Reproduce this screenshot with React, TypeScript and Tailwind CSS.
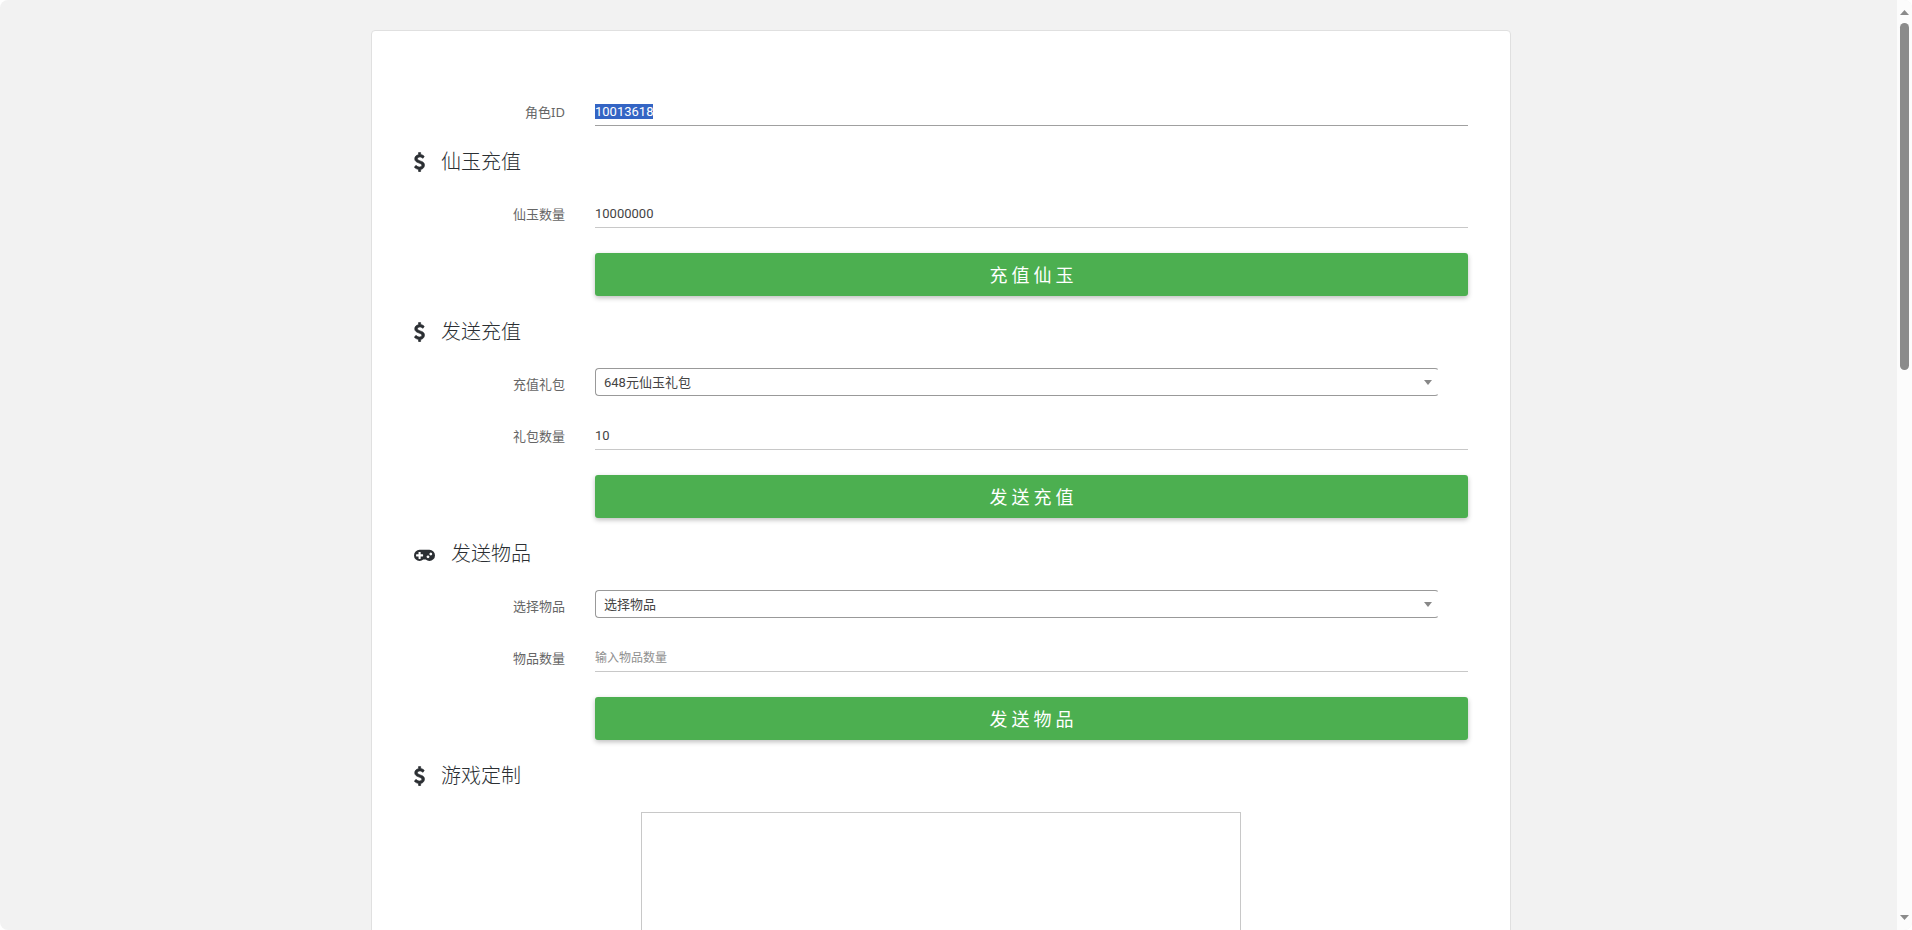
import { useEffect, useRef, type ReactNode } from "react";

function DollarIcon() {
  return (
    <svg
      viewBox="384 0 1024 1792"
      className="h-5 w-[11px] shrink-0 fill-current stroke-current"
      strokeWidth="60"
      aria-hidden="true"
    >
      <path d="M1362 1185q0 153-99.5 263.5t-258.5 136.5v175q0 14-9 23t-23 9h-135q-13 0-22.5-9.5t-9.5-22.5v-175q-66-9-127.5-31t-101.5-44.5-74-48-46.5-37.5-17.5-18q-17-21-2-41l103-135q7-10 23-12 15-2 24 9l2 2q113 99 243 125 37 8 74 8 81 0 142.5-43t61.5-122q0-28-15-53t-33.5-42-58.5-37.5-66-32-80-32.5q-39-16-61.5-25t-61.5-26.5-62.5-31-56.5-35.5-53.5-42.5-43.5-49-35.5-58-21-66.5-8.5-78q0-138 98-242t255-134v-180q0-13 9.5-22.5t22.5-9.5h135q14 0 23 9t9 23v176q57 6 110.5 23t87 33.5 63.5 37.5 39 29 15 14q17 18 5 38l-81 146q-8 15-23 16-14 3-27-7-3-3-14.5-12t-39-26.5-58.5-32-74.5-26-85.5-11.5q-95 0-155 43t-60 111q0 26 8.5 48t29.5 41.5 39.5 33 56 31 60.5 27 70 27.5q53 20 81 31.5t76 35 75.5 42.5 62 50 53 63.5 31.5 76.5 13 94z" />
    </svg>
  );
}

function GamepadIcon() {
  return (
    <svg viewBox="0 0 1920 1792" className="h-5 w-[21px] shrink-0 fill-current" aria-hidden="true">
      <path d="M832 1088v-128q0-14-9-23t-23-9h-192v-192q0-14-9-23t-23-9h-128q-14 0-23 9t-9 23v192h-192q-14 0-23 9t-9 23v128q0 14 9 23t23 9h192v192q0 14 9 23t23 9h128q14 0 23-9t9-23v-192h192q14 0 23-9t9-23zm576 64q0-53-37.5-90.5t-90.5-37.5-90.5 37.5-37.5 90.5 37.5 90.5 90.5 37.5 90.5-37.5 37.5-90.5zm256-256q0-53-37.5-90.5t-90.5-37.5-90.5 37.5-37.5 90.5 37.5 90.5 90.5 37.5 90.5-37.5 37.5-90.5zm256 128q0 212-150 362t-362 150q-192 0-338-128h-220q-146 128-338 128-212 0-362-150t-150-362 150-362 362-150h896q212 0 362 150t150 362z" />
    </svg>
  );
}

function Heading({ icon, children }: { icon: ReactNode; children: ReactNode }) {
  return (
    <h2 className="mt-[22px] mb-4 flex h-7 items-center gap-4 text-xl leading-7 font-light text-[#2b2f33]">
      {icon}
      <span>{children}</span>
    </h2>
  );
}

function Row({ id, label, children }: { id: string; label: string; children: ReactNode }) {
  return (
    <div className="grid grid-cols-[151px_1fr] gap-x-[30px]">
      <label
        htmlFor={id}
        className="pt-3 text-right font-['Noto_Sans','Noto_Sans_CJK_SC',sans-serif] text-[13px] leading-5 text-[#666]"
      >
        {label}
      </label>
      {children}
    </div>
  );
}

const inputClass =
  "h-9 w-full min-w-0 border-b border-[#c8c8c8] bg-transparent pt-2 pb-0 text-[13px] leading-4 text-[#444] outline-none placeholder:text-xs placeholder:text-[#8f8f8f] focus:border-[#a0a0a0] selection:bg-[#3465c4] selection:text-white";

function SelectBox({ id, options }: { id: string; options: string[] }) {
  return (
    <div className="relative mt-[6px] mr-[29px] h-[30px]">
      <select
        id={id}
        className="block h-7 w-full appearance-none rounded border border-r-transparent border-[#999] bg-white px-2 pt-[2px] text-[13px] leading-5 text-[#444] outline-none"
      >
        {options.map((o) => (
          <option key={o}>{o}</option>
        ))}
      </select>
      <svg viewBox="0 0 8 5" className="pointer-events-none absolute top-3 right-[7px] h-[5px] w-2 fill-[#888]" aria-hidden="true">
        <path d="M0 0h8L4 5z" />
      </svg>
    </div>
  );
}

function SubmitButton({ children }: { children: ReactNode }) {
  return (
    <div className="mt-[25px] pl-[181px]">
      <button
        type="button"
        className="h-[43px] w-full rounded-[3px] bg-[#4caf50] pb-[2px] font-['Noto_Sans_CJK_SC',sans-serif] text-lg leading-6 text-white shadow-[0_2px_5px_rgba(0,0,0,0.26)]"
      >
        {children}
      </button>
    </div>
  );
}

function ScrollRail() {
  return (
    <div className="flex w-[15px] shrink-0 flex-col items-center bg-[#fcfcfc] pt-[10px] pb-[10px]" aria-hidden="true">
      <svg viewBox="0 0 9 5" className="h-[5px] w-[9px] fill-[#8b8b8b]">
        <path d="M4.500 0L9 5H0z" />
      </svg>
      <div className="mt-2 h-[347px] w-[9px] rounded-full bg-[#8b8b8b]" />
      <svg viewBox="0 0 9 5" className="mt-auto h-[5px] w-[9px] fill-[#8b8b8b]">
        <path d="M0 0h9L4.500 5z" />
      </svg>
    </div>
  );
}

export default function App() {
  const roleRef = useRef<HTMLInputElement>(null);

  useEffect(() => {
    roleRef.current?.focus();
    roleRef.current?.select();
  }, []);

  return (
    <div className="flex h-screen overflow-hidden rounded-lg bg-[#f2f2f2] font-[Roboto,'Noto_Sans_CJK_SC',sans-serif]">
      <main className="min-w-0 flex-1 overflow-y-auto pr-[15px] [scrollbar-width:none]">
        <form className="mx-auto mt-[30px] mb-8 max-w-[1140px] rounded-sm border border-[#e0e0e0] bg-white px-[42px] pt-[59px] pb-16">
          <Row id="role" label="角色ID">
            <input ref={roleRef} id="role" type="text" defaultValue="10013618" className={inputClass} />
          </Row>

          <Heading icon={<DollarIcon />}>仙玉充值</Heading>
          <Row id="jade" label="仙玉数量">
            <input id="jade" type="text" defaultValue="10000000" className={inputClass} />
          </Row>
          <SubmitButton>充 值 仙 玉</SubmitButton>

          <Heading icon={<DollarIcon />}>发送充值</Heading>
          <div className="flex flex-col gap-4">
            <Row id="pack" label="充值礼包">
              <SelectBox id="pack" options={["648元仙玉礼包"]} />
            </Row>
            <Row id="packCount" label="礼包数量">
              <input id="packCount" type="text" defaultValue="10" className={inputClass} />
            </Row>
          </div>
          <SubmitButton>发 送 充 值</SubmitButton>

          <Heading icon={<GamepadIcon />}>发送物品</Heading>
          <div className="flex flex-col gap-4">
            <Row id="item" label="选择物品">
              <SelectBox id="item" options={["选择物品"]} />
            </Row>
            <Row id="itemCount" label="物品数量">
              <input id="itemCount" type="text" placeholder="输入物品数量" className={inputClass} />
            </Row>
          </div>
          <SubmitButton>发 送 物 品</SubmitButton>

          <Heading icon={<DollarIcon />}>游戏定制</Heading>
          <textarea
            aria-label="游戏定制"
            className="mx-auto mt-[22px] block h-75 w-full max-w-[600px] resize-none border border-[#c8c8c8] bg-white p-2 text-[13px] text-[#333] outline-none"
          />
        </form>
      </main>
      <ScrollRail />
    </div>
  );
}
